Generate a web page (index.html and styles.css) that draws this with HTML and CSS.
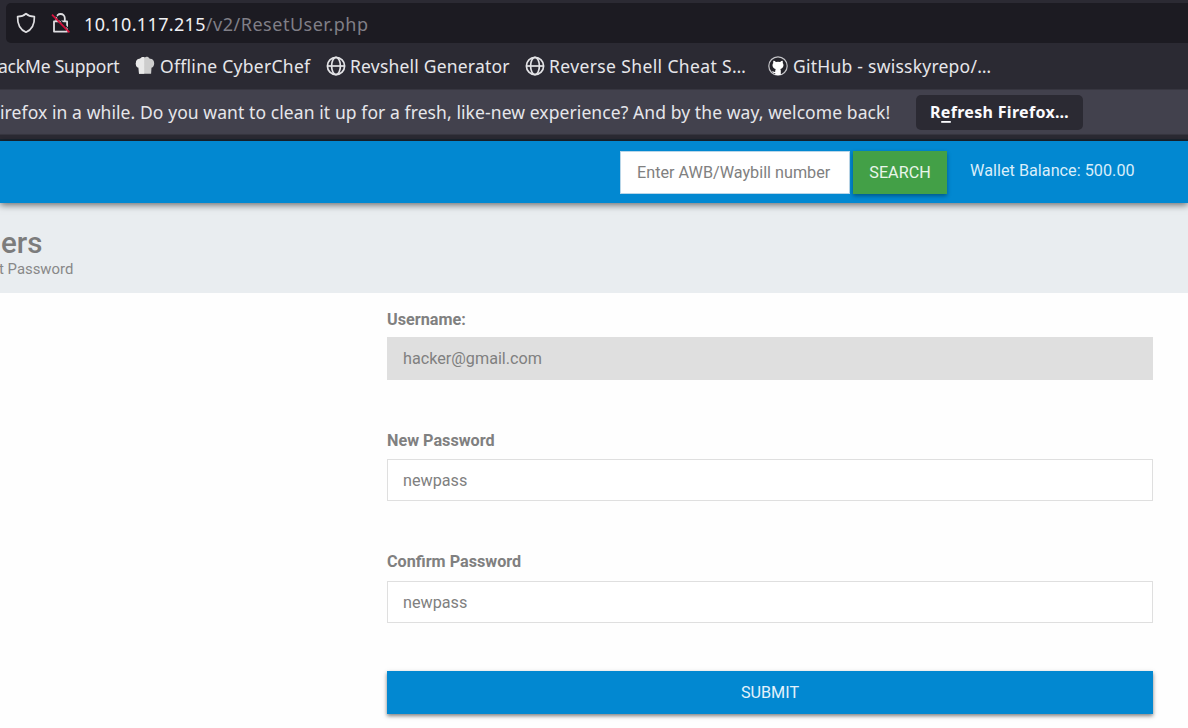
FILE: index.html
```html
<!DOCTYPE html>
<html lang="en">
<head>
<meta charset="utf-8">
<title>Reset Password</title>
<link rel="stylesheet" href="styles.css">
</head>
<body>
<div class="chrome">
  <div class="urlbar">
    <svg class="shield" width="20" height="22" viewBox="0 0 20 22" fill="none" stroke="#dedee1" stroke-width="1.7" stroke-linejoin="round"><path d="M10 1.6C8.3 3.3 4.6 4.6 1.6 4.7C1.4 11.2 3.7 17.5 10 20.2C16.3 17.5 18.6 11.2 18.4 4.7C15.4 4.6 11.7 3.3 10 1.6Z"/></svg>
    <svg class="lock" width="20" height="22" viewBox="0 0 20 22" fill="none"><path d="M5.4 9V6.2a4.2 4.2 0 0 1 8.4 0V9M3 9.4h13.1v10.2H3Z" stroke="#dedee1" stroke-width="1.8" stroke-linejoin="round"/><path d="M2.4 1.2L19.4 18.6" stroke="#1c1b22" stroke-width="1.2"/><path d="M1 2.6L18.4 20.4" stroke="#d5103c" stroke-width="1.8"/></svg>
    <span class="url"><span class="host">10.10.117.215</span><span class="path">/v2/ResetUser.php</span></span>
  </div>
  <div class="bookmarks">
    <span class="bm bm-support">ackMe Support</span>
    <svg class="ico-chef" width="20" height="20" viewBox="0 0 20 20"><path d="M4 17.8L3.6 11.6C1.7 11.2.8 9.5.8 7.4C.8 4.5 2.8 2.6 5.2 2.8C6.5.7 8.4.5 9.9 1.4C11.4.4 13.4.8 14.7 2.7C17.4 2.4 19.2 4.5 19.2 7.2C19.2 9.5 18.2 11.2 16.5 11.7L16.1 17.8Z" fill="#cdcdcd"/><path d="M4 17.8L3.6 11.6C1.7 11.2.8 9.5.8 7.4C.8 4.5 2.8 2.6 5.2 2.8C6.3 1.1 7.8.7 9.2 1.1V17.8Z" fill="#e9e9e9"/></svg>
    <span class="bm bm-chef">Offline CyberChef</span>
    <svg class="ico-globe" width="20" height="20" viewBox="0 0 20 20" fill="none" stroke="#e3e3e6" stroke-width="1.7"><circle cx="10" cy="10" r="8.6"/><ellipse cx="10" cy="10" rx="4.4" ry="8.6"/><path d="M1.4 10H18.6"/></svg>
    <span class="bm bm-rev">Revshell Generator</span>
    <svg class="ico-globe" width="20" height="20" viewBox="0 0 20 20" fill="none" stroke="#e3e3e6" stroke-width="1.7"><circle cx="10" cy="10" r="8.6"/><ellipse cx="10" cy="10" rx="4.4" ry="8.6"/><path d="M1.4 10H18.6"/></svg>
    <span class="bm bm-cheat">Reverse Shell Cheat S…</span>
    <svg class="ico-github" width="20" height="20" viewBox="0 0 20 20"><circle cx="10" cy="10" r="9.2" fill="#25242b" stroke="#c4c4c8" stroke-width="1.2"/><path d="M5.4 4.8C6.4 4.8 7.3 5.4 7.9 5.9Q10 5.4 12.1 5.9C12.9 5.3 13.7 4.8 14.6 4.8C15 5.8 14.9 6.4 14.7 7C16.4 9.1 15.2 12.4 12.3 13C12.8 13.6 12.8 14.3 12.8 15.1V19H7.2V17.1C5.2 17.4 4.9 16 3.8 15.2C5.3 15 5.7 16.2 7.2 15.8C7.2 14.6 7.3 13.6 7.7 13C4.8 12.4 3.6 9.1 5.3 7C5 6.4 5 5.7 5.4 4.8Z" fill="#fff"/></svg>
    <span class="bm bm-github">GitHub - swisskyrepo/…</span>
  </div>
  <div class="notice">
    <span class="notice-text">irefox in a while. Do you want to clean it up for a fresh, like-new experience? And by the way, welcome back!</span>
    <button class="refresh"><span class="refresh-label">R<span class="key">e</span>fresh Firefox…</span></button>
  </div>
</div>
<header class="topbar">
  <input class="search-input" type="text" placeholder="Enter AWB/Waybill number">
  <button class="search-btn">SEARCH</button>
  <span class="wallet">Wallet Balance: 500.00</span>
</header>
<section class="heading">
  <h1 class="title">ers</h1>
  <p class="crumb">t Password</p>
</section>
<main class="form">
  <label class="label">Username:</label>
  <div class="field disabled">hacker@gmail.com</div>
  <label class="label label-new">New Password</label>
  <div class="field">newpass</div>
  <label class="label label-confirm">Confirm Password</label>
  <div class="field last">newpass</div>
  <button class="submit">SUBMIT</button>
</main>
</body>
</html>
```
FILE: styles.css
```css
* { box-sizing: border-box; }
body {
  margin: 0;
  width: 1188px;
  height: 728px;
  overflow: hidden;
  background: #fefefe;
  font-family: Roboto, "Liberation Sans", sans-serif;
  font-size: 16.2px;
  color: #808080;
}
button { border: 0; font-family: inherit; padding: 0; }
svg { display: block; flex: none; }

.chrome {
  height: 141px;
  background: #2b2a33;
  border-bottom: 2px solid #1a2530;
  padding-top: 3px;
  font-family: "Noto Sans", "Open Sans", sans-serif;
  font-size: 17.5px;
  white-space: nowrap;
  color: #e6e6ea;
}
.urlbar {
  height: 40px;
  margin-left: 6px;
  padding-left: 10px;
  background: #1c1b22;
  border-radius: 5px 0 0 5px;
  display: flex;
  align-items: center;
}
.lock { margin-left: 15px; }
.url { margin: 2px 0 0 13px; font-size: 18px; }
.host { color: #f0f0f3; letter-spacing: .34px; }
.path { color: #807f87; letter-spacing: .51px; }

.bookmarks {
  height: 46px;
  display: flex;
  align-items: center;
}
.bm { display: block; line-height: 30px; }
.bm-support { width: 137px; margin-left: -2px; letter-spacing: -.2px; }
.bm-chef { width: 163px; margin-left: 5px; letter-spacing: .28px; }
.bm-rev { width: 172px; margin-left: 4px; letter-spacing: .2px; }
.bm-cheat { width: 219px; margin-left: 4px; letter-spacing: .38px; }
.bm-github { margin-left: 5px; letter-spacing: .24px; }
.ico-globe { margin-left: 3px; }

.notice {
  height: 46px;
  background: #42414d;
  border-top: 1px solid #373640;
  border-bottom: 1px solid #373640;
  display: flex;
  align-items: center;
}
.notice-text { width: 916px; flex: none; letter-spacing: .088px; }
.refresh {
  width: 167px;
  height: 35px;
  background: #2b2a33;
  border-radius: 5px;
  color: #fbfbfe;
  font-size: 16px;
  font-weight: 700;
  letter-spacing: .32px;
}
.key { box-shadow: 0 2px 0 -0.2px #fbfbfe; display: inline-block; line-height: 18px; }

.topbar {
  height: 62px;
  background: #0288d1;
  padding: 10px 0 0 620px;
  display: flex;
  align-items: flex-start;
  box-shadow: 0 2px 7px rgba(0, 0, 0, .55);
  position: relative;
}
.search-input {
  width: 230px;
  height: 43px;
  padding: 0 15px 0 16px;
  border: 1px solid #b9d6e8;
  background: #fff;
  font: 16.2px Roboto, sans-serif;
}
.search-input::placeholder { color: #808080; opacity: 1; }
.search-btn {
  width: 94px;
  height: 43px;
  margin-left: 3px;
  background: #43a047;
  color: #e9f5ea;
  font-size: 16.2px;
  box-shadow: 0 2px 4px rgba(0, 0, 0, .35);
}
.wallet { margin: 10px 0 0 23px; line-height: 19px; color: #d9eefa; letter-spacing: .03px; }

.heading { height: 90px; background: #e9edf0; padding-top: 23px; }
.title { margin: 0 0 0 1px; font-size: 29.5px; line-height: 34px; font-weight: 500; color: #7c7c7c; }
.crumb { margin: 0 0 0 -1px; font-size: 14.9px; line-height: 18px; color: #888; }

.form {
  width: 766px;
  margin-left: 387px;
  padding-top: 17px;
  display: flex;
  flex-direction: column;
}
.label { height: 20px; line-height: 20px; font-weight: 700; margin-bottom: 7px; }
.label-new { margin-bottom: 8px; }
.label-confirm { margin-bottom: 9px; }
.field {
  height: 42px;
  line-height: 41px;
  padding-left: 15px;
  border: 1px solid #dfdfdf;
  background: #fff;
  margin-bottom: 51px;
}
.disabled { height: 43px; line-height: 42.5px; background: #dfdfdf; }
.last { margin-bottom: 48px; }
.submit {
  height: 43px;
  background: #0288d1;
  color: #e3f2fb;
  font-size: 16.2px;
  box-shadow: 0 2px 4px rgba(0, 0, 0, .5);
}
```
